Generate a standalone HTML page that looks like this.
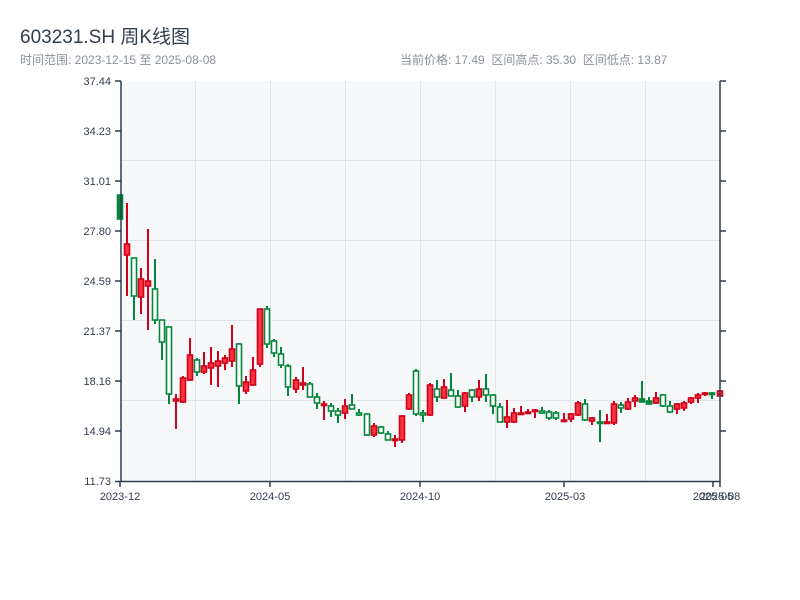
<!DOCTYPE html>
<html><head><meta charset="utf-8"><style>
body{margin:0;width:800px;height:600px;background:#fff;overflow:hidden;font-family:"Liberation Sans","Noto Sans CJK SC",sans-serif}
.t{position:absolute;white-space:nowrap}
</style></head><body>
<div class="t" style="left:20px;top:22px;font-size:19px;color:#333d4b">603231.SH 周K线图</div>
<div class="t" style="left:20px;top:51px;font-size:12px;color:#8a9099">时间范围: 2023-12-15 至 2025-08-08</div>
<div class="t" style="left:400px;top:51px;font-size:12px;color:#8a9099">当前价格: 17.49&nbsp;&nbsp;区间高点: 35.30&nbsp;&nbsp;区间低点: 13.87</div>
<svg id="s" width="800" height="600" style="position:absolute;left:0;top:0" font-family="Liberation Sans, sans-serif" font-size="11" fill="#333d4b">
<rect x="121" y="81" width="599" height="400" fill="#f6f8fa"/>
<g stroke="#e1e4e8" stroke-width="1">
<line x1="121" y1="160.5" x2="720" y2="160.5"/><line x1="121" y1="240.5" x2="720" y2="240.5"/><line x1="121" y1="320.5" x2="720" y2="320.5"/><line x1="121" y1="400.5" x2="720" y2="400.5"/>
<line x1="195.5" y1="81" x2="195.5" y2="481"/><line x1="270.5" y1="81" x2="270.5" y2="481"/><line x1="345.5" y1="81" x2="345.5" y2="481"/><line x1="420.5" y1="81" x2="420.5" y2="481"/><line x1="495.5" y1="81" x2="495.5" y2="481"/><line x1="570.5" y1="81" x2="570.5" y2="481"/><line x1="645.5" y1="81" x2="645.5" y2="481"/>
</g>
<g id="c"></g>
<g stroke="#2d3e50" stroke-width="1.5">
<line x1="121" y1="81" x2="121" y2="481.5"/><line x1="720" y1="81" x2="720" y2="481.5"/><line x1="115" y1="481.5" x2="720" y2="481.5"/>
<line x1="115" y1="81" x2="121" y2="81"/><line x1="115" y1="131" x2="121" y2="131"/><line x1="115" y1="181" x2="121" y2="181"/><line x1="115" y1="231" x2="121" y2="231"/><line x1="115" y1="281" x2="121" y2="281"/><line x1="115" y1="331" x2="121" y2="331"/><line x1="115" y1="381" x2="121" y2="381"/><line x1="115" y1="431" x2="121" y2="431"/>
<line x1="720" y1="81" x2="726" y2="81"/><line x1="720" y1="131" x2="726" y2="131"/><line x1="720" y1="181" x2="726" y2="181"/><line x1="720" y1="231" x2="726" y2="231"/><line x1="720" y1="281" x2="726" y2="281"/><line x1="720" y1="331" x2="726" y2="331"/><line x1="720" y1="381" x2="726" y2="381"/><line x1="720" y1="431" x2="726" y2="431"/>
<line x1="120" y1="481" x2="120" y2="487"/><line x1="270" y1="481" x2="270" y2="487"/><line x1="420" y1="481" x2="420" y2="487"/><line x1="564" y1="481" x2="564" y2="487"/><line x1="713" y1="481" x2="713" y2="487"/><line x1="720" y1="481" x2="720" y2="487"/>
</g>
<g text-anchor="end">
<text x="111" y="85">37.44</text><text x="111" y="135">34.23</text><text x="111" y="185">31.01</text><text x="111" y="235">27.80</text><text x="111" y="285">24.59</text><text x="111" y="335">21.37</text><text x="111" y="385">18.16</text><text x="111" y="435">14.94</text><text x="111" y="485">11.73</text>
</g>
<g text-anchor="middle">
<text x="120" y="500">2023-12</text><text x="270" y="500">2024-05</text><text x="420" y="500">2024-10</text><text x="565" y="500">2025-03</text><text x="713" y="500">2025-05</text><text x="720" y="500">2025-08</text>
</g>
</svg>
<script>
var d=[
[120,195,219,195,219,'G'],[127,244,255,203,296,'r'],[134,258,296,258,320,'g'],[141,279,297,268,314,'r'],[148,281,286,229,330,'r'],[155,289,320,259,324,'g'],[162,320,342,320,360,'g'],[169,327,394,327,404,'g'],[176,399,401,394,429,'r'],[183,378,402,376,403,'r'],[190,355,380,338,381,'r'],[197,360,372,358,376,'g'],[204,366,372,352,374,'r'],[211,363,368,347,385,'r'],[218,361,366,351,387,'r'],[225,358,363,355,370,'r'],[232,349,361,325,367,'r'],[239,344,386,343,404,'g'],[246,382,391,376,394,'r'],[253,370,385,357,386,'r'],[260,309,364,309,367,'r'],[267,309,344,306,348,'g'],[274,341,353,339,357,'g'],[281,354,365,347,368,'g'],[288,366,387,364,396,'g'],
[296,380,389,377,393,'r'],[303,383,385,367,390,'r'],[310,384,397,382,397,'g'],[317,397,403,393,409,'g'],[324,404,405,401,420,'r'],[331,406,411,403,417,'g'],[338,411,415,408,423,'g'],[345,406,413,399,419,'r'],[352,405,409,394,409,'g'],[359,413,415,409,416,'g'],[367,414,435,414,436,'g'],[374,426,435,423,437,'r'],[381,427,433,426,434,'g'],[388,434,440,431,440,'g'],[395,439,440,435,447,'r'],[402,416,440,415,443,'r'],[409,395,409,393,410,'r'],[416,371,414,369,416,'g'],[423,413,415,410,422,'g'],[430,385,415,383,416,'r'],[437,389,397,380,402,'g'],[444,387,398,379,398,'r'],[451,390,396,373,396,'g'],[458,396,407,390,408,'g'],[465,393,406,392,412,'r'],[472,390,397,389,402,'g'],[479,389,397,380,401,'r'],[486,389,395,374,402,'g'],[493,395,406,394,414,'g'],[500,407,422,403,422,'g'],[507,417,422,400,428,'r'],[514,413,422,408,423,'r'],[521,413,414,406,415,'r'],[528,412,413,409,414,'r'],[535,410,411,409,418,'r'],[542,411,413,407,414,'g'],[549,412,418,410,420,'g'],[556,413,418,411,420,'g'],
[564,420,421,413,422,'r'],[571,414,419,413,422,'r'],[578,403,415,401,416,'r'],[585,404,420,399,421,'g'],[592,418,421,417,425,'r'],[600,422,423,410,442,'g'],[607,422,423,414,423,'r'],[614,404,423,401,425,'r'],[621,405,408,402,413,'g'],[628,402,409,398,410,'r'],[635,398,401,395,407,'r'],[642,399,402,381,402,'G'],[649,401,404,397,404,'G'],[656,398,403,392,404,'r'],[663,395,406,394,407,'g'],[670,406,412,401,413,'g'],[677,404,409,403,414,'r'],[684,403,408,401,411,'r'],[691,398,402,397,404,'r'],[698,395,398,393,403,'r'],[705,393,394,392,396,'r'],[712,393,394,392,399,'G'],[720,391,396,391,396,'r']];
var h='';d.forEach(function(c){var x=c[0],col=c[5];var st=col=='r'?'#d0021b':'#04873a';var f=col=='r'?'#ff3340':(col=='G'?'#04873a':'#fff');
h+='<line x1="'+x+'" y1="'+c[3]+'" x2="'+x+'" y2="'+c[4]+'" stroke="'+st+'" stroke-width="2"/>';
var hh=Math.max(c[2]-c[1],1.5);h+='<rect x="'+(x-2.5)+'" y="'+c[1]+'" width="5" height="'+hh+'" fill="'+f+'" stroke="'+st+'" stroke-width="1.6"/>';});
document.getElementById('c').innerHTML=h;
</script>
</body></html>
